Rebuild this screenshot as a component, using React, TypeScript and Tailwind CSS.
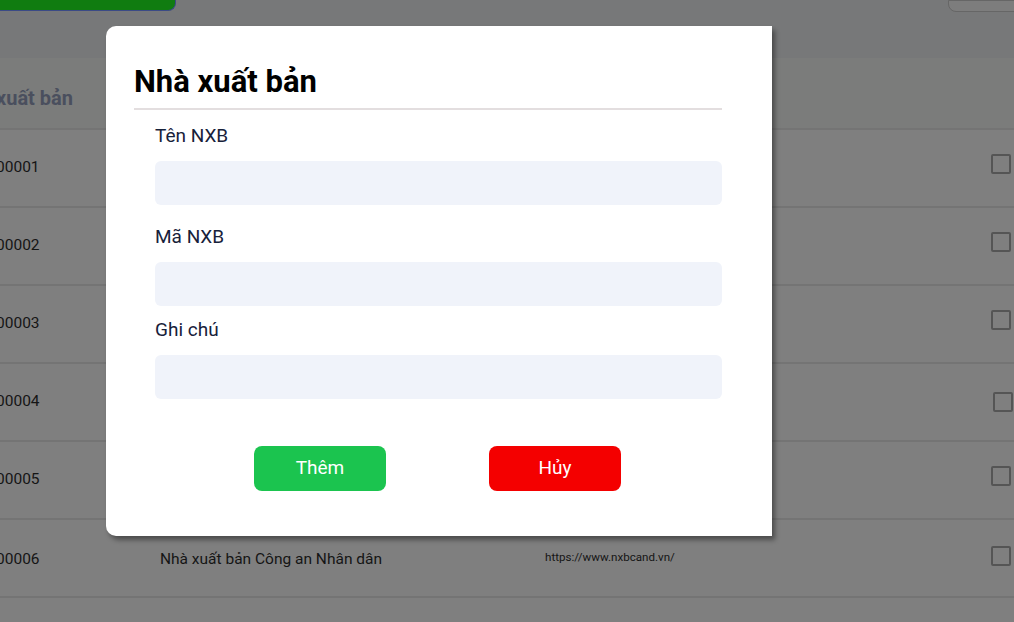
const rows = [
  { code: '00001' },
  { code: '00002' },
  { code: '00003' },
  { code: '00004', shift: true },
  { code: '00005' },
  { code: '00006', name: 'Nhà xuất bản Công an Nhân dân', url: 'https://www.nxbcand.vn/', low: true },
  { code: '' },
];

function Field({ label, className }: { label: string; className?: string }) {
  return (
    <div className={className}>
      <label className="block text-[19px] leading-[24px] text-[#17213a]">{label}</label>
      <input className="mt-[13px] block w-full h-[44px] rounded-[6px] bg-[#f0f3fa] outline-none px-3" />
    </div>
  );
}

export default function App() {
  return (
    <div className="relative w-[1014px] h-[622px] overflow-hidden bg-[#7f7f7f] font-['Roboto',sans-serif]">
      {/* top bar */}
      <div className="h-[58px] bg-[#777879] flex justify-between items-start">
        <div className="w-[176px] h-[11px] bg-[#107c10] rounded-br-[8px] border-b border-r border-[#3b4a86]" />
        <div className="w-[68px] h-[12px] mr-[-2px] rounded-bl-[8px] border border-[#666] bg-[#7d7d7d]" />
      </div>

      {/* table header */}
      <div className="h-[70px] bg-[#7b7c7b] flex items-center pt-[10px]">
        <span className="-ml-[4px] text-[20px] font-bold text-[#4a4f5e]">xuất bản</span>
      </div>

      {/* rows */}
      {rows.map((r, i) => (
        <div key={i} className={r.low ? 'h-[78px] border-t-2 border-[#747474] flex items-center pt-[3px]' : 'h-[78px] border-t-2 border-[#747474] flex items-center'}>
          <span className="w-[164px] -ml-[4px] text-[15.5px] text-[#151515]">{r.code}</span>
          <span className="w-[385px] text-[15.5px] text-[#151515]">{r.name}</span>
          <span className="flex-1 text-[11.6px] text-[#151515] -mt-[4px]">{r.url}</span>
          {r.code && (
            <span
              className={
                r.shift
                  ? 'w-[20px] h-[20px] mr-[1px] rounded-[2px] border-2 border-[#555]'
                  : 'w-[20px] h-[20px] mr-[3px] -mt-[8px] rounded-[2px] border-2 border-[#555]'
              }
            />
          )}
        </div>
      ))}

      {/* modal */}
      <div className="absolute left-[106px] top-[26px] w-[666px] h-[510px] bg-white rounded-l-[10px] shadow-[3px_4px_5px_rgba(0,0,0,0.4)] pl-[28px] pr-[50px] pt-[37px]">
        <h2 className="text-[31px] leading-[37px] font-bold text-black">Nhà xuất bản</h2>
        <div className="mt-[8px] h-[2px] bg-[#e3dedf]" />
        <div className="pl-[21px]">
          <Field label="Tên NXB" className="mt-[14px]" />
          <Field label="Mã NXB" className="mt-[20px]" />
          <Field label="Ghi chú" className="mt-[12px]" />
          <div className="mt-[47px] flex gap-[103px] pl-[99px]">
            <button className="w-[132px] h-[45px] rounded-[8px] bg-[#1bc44f] text-white text-[19px] font-normal">Thêm</button>
            <button className="w-[132px] h-[45px] rounded-[8px] bg-[#f40000] text-white text-[19px] font-normal">Hủy</button>
          </div>
        </div>
      </div>
    </div>
  );
}
